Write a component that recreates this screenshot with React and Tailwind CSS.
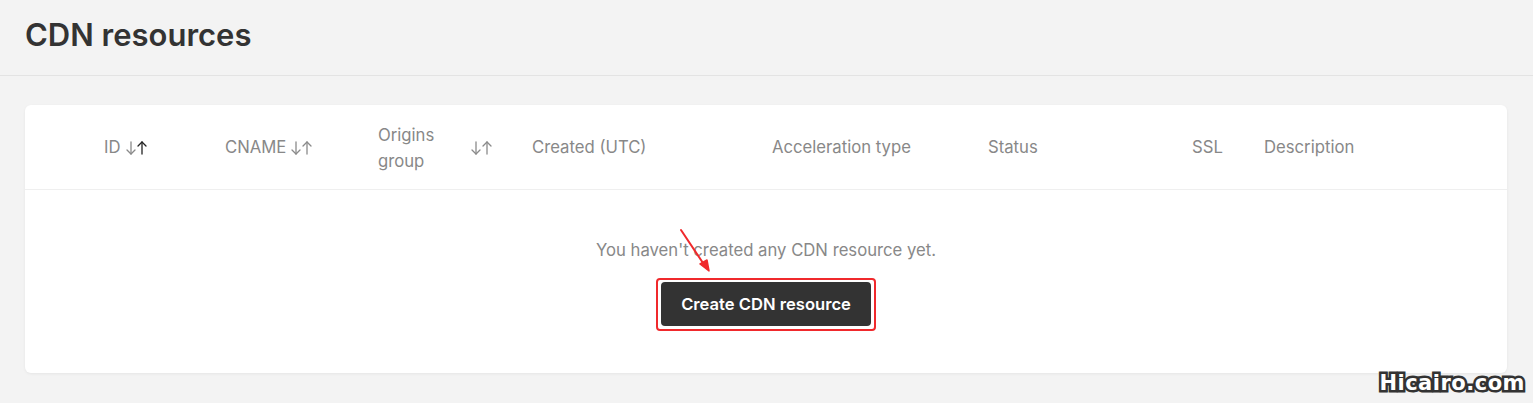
import React from 'react'

const SortArrows = ({ active }) => (
    <svg width="24" height="16" viewBox="0 0 24 16" className="shrink-0">
        <g fill="none" strokeWidth="1.3" strokeLinecap="round" strokeLinejoin="round">
            {/* down arrow */}
            <g stroke="#8a8a8a">
                <path d="M6 2v12" />
                <path d="M2 10l4 4 4-4" />
            </g>
            {/* up arrow */}
            <g stroke={active ? '#222' : '#8a8a8a'}>
                <path d="M17 14V2" />
                <path d="M13 6l4-4 4 4" />
            </g>
        </g>
    </svg>
)

const columns = [
    { label: 'ID', width: 'w-[121px]', sort: true, active: true },
    { label: 'CNAME', width: 'w-[153px]', sort: true },
    { label: 'Origins group', width: 'w-[154px]', sort: true, split: true },
    { label: 'Created (UTC)', width: 'w-[240px]' },
    { label: 'Acceleration type', width: 'w-[216px]' },
    { label: 'Status', width: 'w-[204px]' },
    { label: 'SSL', width: 'w-[72px]' },
    { label: 'Description', width: 'flex-1' },
]

const App = () => {
    return (
        <div className="min-h-screen w-full bg-[#f3f3f3] font-['Inter',sans-serif] relative overflow-hidden">
            {/* Page header */}
            <div className="h-[76px] border-b border-[#e3e3e3] px-[25px] flex items-center">
                <h1 className="text-[31px] font-semibold text-[#333] -mt-1">CDN resources</h1>
            </div>

            <div className="px-[25px] pr-[26px] pt-[29px]">
                <div className="bg-white rounded-md shadow-[0_1px_3px_rgba(0,0,0,0.06)]">
                    {/* Table head */}
                    <div className="h-[85px] flex items-center pl-[79px] border-b border-[#efefef] text-[16.7px] text-[#888]">
                        {columns.map((c) => (
                            <div key={c.label} className={`${c.width} flex items-center pt-[2px]`}>
                                {c.split ? (
                                    <div className="flex items-center w-full">
                                        <span className="leading-[26px] w-[92px]">Origins<br />group</span>
                                        <SortArrows />
                                    </div>
                                ) : (
                                    <div className="flex items-center gap-[4px]">
                                        <span>{c.label}</span>
                                        {c.sort && <SortArrows active={c.active} />}
                                    </div>
                                )}
                            </div>
                        ))}
                    </div>

                    {/* Empty state */}
                    <div className="h-[183px] flex flex-col items-center pt-[48px]">
                        <p className="text-[16.7px] text-[#888]">You haven't created any CDN resource yet.</p>
                        <div className="mt-[19px] relative">
                            <button className="bg-[#333] text-white text-[16.6px] font-semibold h-[44px] w-[210px] rounded-[4px]">
                                Create CDN resource
                            </button>
                            <div className="absolute -inset-x-[5px] -top-[4px] -bottom-[5px] border-2 border-[#f0292c] rounded-[4px] pointer-events-none"></div>
                        </div>
                    </div>
                </div>
            </div>

            {/* Red annotation arrow */}
            <svg className="absolute left-[676px] top-[226px] pointer-events-none" width="40" height="50" viewBox="0 0 40 50">
                <path d="M5 4 L29 40" stroke="#f0292c" strokeWidth="2" strokeLinecap="round" />
                <path d="M33 45 L24 38 L31 34 Z" fill="#f0292c" stroke="#f0292c" strokeWidth="1.5" strokeLinejoin="round" />
            </svg>

            {/* Watermark */}
            <div
                className="absolute right-[8px] bottom-[9px] text-[21px] font-black text-white font-['DejaVu_Sans',sans-serif] tracking-[0.5px] leading-none"
                style={{ WebkitTextStroke: '5px #333', paintOrder: 'stroke fill' }}
            >
                Hicairo.com
            </div>
        </div>
    )
}

export default App
